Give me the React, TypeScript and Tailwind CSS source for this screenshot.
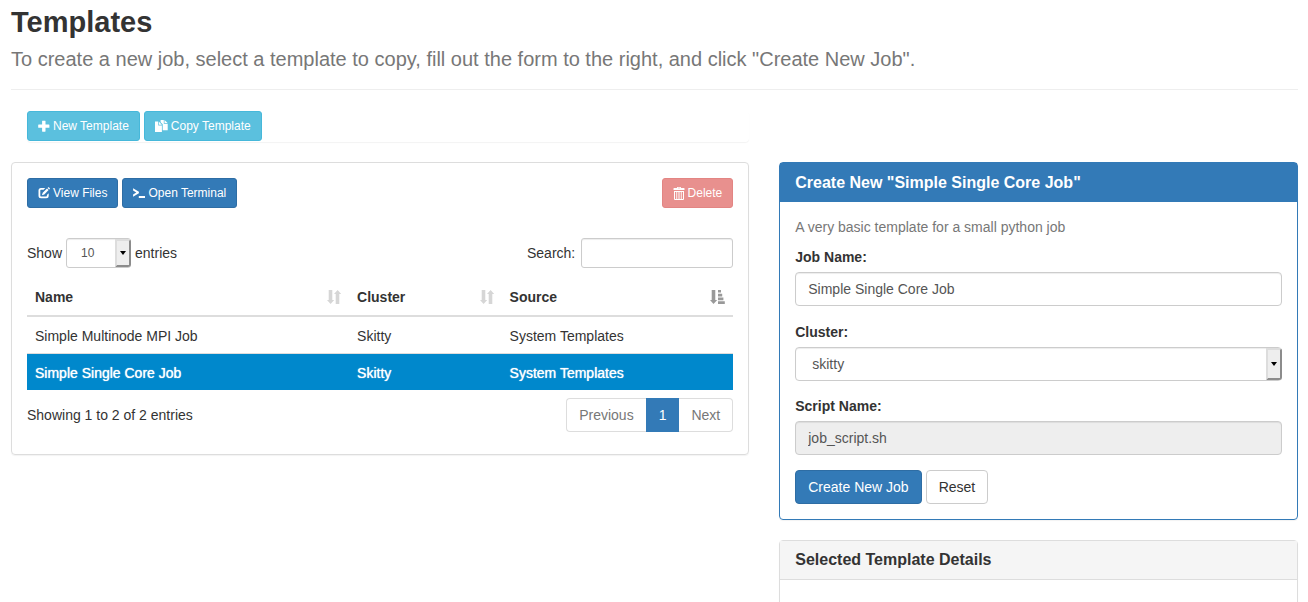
import { useState, type ReactNode } from "react";

type IconProps = { className?: string };

function Glyph({ children, viewBox = "0 0 12 12", className = "size-3" }: { children: ReactNode; viewBox?: string; className?: string }) {
  return (
    <svg viewBox={viewBox} className={`shrink-0 ${className}`} fill="currentColor" aria-hidden="true">
      {children}
    </svg>
  );
}

const PlusIcon = () => (
  <Glyph>
    <path d="M4.500.700h2.600q.4 0 .4.400v3.500h3.500q.4 0 .4.400v2.400q0 .4-.4.400H7.500v3.500q0 .4-.4.400H4.500q-.4 0-.4-.4V7.800H.600q-.4 0-.4-.4V5q0-.4.400-.4h3.500V1.100q0-.4.400-.4z" />
  </Glyph>
);

const CopyIcon = () => (
  <Glyph viewBox="0 0 13 12" className="h-3 w-[13px]">
    <path d="M0 1.500h3.300v4h3.600V12H0z" />
    <path d="M4 1.700l2.900 3H4z" />
    <path d="M5.600 0h3.200v3.700h3.900v6.500H7.700V4.300L5.600 2.200z" />
    <path d="M9.500 0l3.100 2.900H9.500z" />
  </Glyph>
);

const EditIcon = () => (
  <Glyph>
    <path d="M7.300 1H3A2.500 2.500 0 0 0 .5 3.500v5.200A2.500 2.500 0 0 0 3 11.200h5.200a2.500 2.500 0 0 0 2.500-2.500V6.300L8.900 8.100v.6q0 .7-.7.700H3q-.7 0-.7-.7V3.500q0-.7.7-.7h2.500z" />
    <path d="M9 1.500l1.600 1.600-4.300 4.300-2.400.9.800-2.500zM9.600.900l.6-.6q.3-.3.600 0l1 1q.3.300 0 .600l-.6.600z" />
  </Glyph>
);

const TerminalIcon = () => (
  <Glyph>
    <path d="M.1 1.200L5.900 4.700v1.600L.1 9.800V7.400l3.200-1.900L.1 3.600zM5.800 9H12v1.900H5.800z" />
  </Glyph>
);

const TrashIcon = () => (
  <Glyph viewBox="0 0 12 13" className="h-[13px] w-3">
    <path
      fillRule="evenodd"
      d="M4 1V.5Q4 0 4.500 0h3Q8 0 8 .5V1h3q.5 0 .5.500V3H.5V1.500Q.5 1 1 1zM5 1.200h2V.8H5zM1 4h10v8q0 1-1 1H2q-1 0-1-1zM2 5v7h1.300V5zM4.200 5v7h1.300V5zM6.500 5v7h1.300V5zM8.700 5v7H10V5z"
    />
  </Glyph>
);

const SortIcon = ({ className }: IconProps) => (
  <svg viewBox="0 0 14 14" className={`size-3.5 shrink-0 ${className}`} fill="currentColor" aria-hidden="true">
    <path d="M1.700 0h3.600v10h1.900L3.600 14 0 10h1.700zM8.700 14h3.600V4h1.900L10.600 0 7 4h1.700z" />
  </svg>
);

const SortAscIcon = ({ className }: IconProps) => (
  <svg viewBox="0 0 15 14" className={`h-3.5 w-[15px] shrink-0 ${className}`} fill="currentColor" aria-hidden="true">
    <path d="M1.700 0h3.600v10h1.900L3.500 14 0 10h1.700zM8 0h3v2.600H8zM8 3.700h4.200v2.700H8zM8 7.500h5.400v2.700H8zM8 11.200h6.800v2.700H8z" />
  </svg>
);

const smallButton = "flex h-[30px] items-center gap-[3px] rounded-[3px] border px-2.5 text-xs text-white";
const primary = "border-[#2e6da4] bg-[#337ab7]";
const info = "border-[#46b8da] bg-[#5bc0de]";
const field =
  "w-full rounded border border-[#ccc] px-3 text-sm text-[#555] shadow-[inset_0_1px_1px_rgba(0,0,0,0.075)]";

function DropArrow() {
  return (
    <span className="pointer-events-none absolute inset-y-px right-0 flex w-4 items-center justify-center rounded-r-[3px] border-2 border-t-[#ddd] border-r-[#8c8c8c] border-b-[#8c8c8c] border-l-[#ddd] bg-[#eee]">
      <svg viewBox="0 0 6 4" className="h-1 w-1.5" aria-hidden="true">
        <path d="M0 0h6L3 4z" />
      </svg>
    </span>
  );
}

const templates = [
  { name: "Simple Multinode MPI Job", cluster: "Skitty", source: "System Templates" },
  { name: "Simple Single Core Job", cluster: "Skitty", source: "System Templates" },
];

function TemplatesTable() {
  const [selected, setSelected] = useState(1);
  return (
    <table className="mt-2.5 w-full table-fixed border-collapse text-left">
      <colgroup>
        <col className="w-[45.6%]" />
        <col className="w-[21.6%]" />
        <col />
      </colgroup>
      <thead>
        <tr className="h-[38px] border-b-2 border-[#ddd]">
          <th className="px-2">
            <div className="flex items-center justify-between">
              Name <SortIcon className="text-[#d6d6d6]" />
            </div>
          </th>
          <th className="px-2">
            <div className="flex items-center justify-between">
              Cluster <SortIcon className="text-[#d6d6d6]" />
            </div>
          </th>
          <th className="px-2">
            <div className="flex items-center justify-between">
              Source <SortAscIcon className="text-[#999]" />
            </div>
          </th>
        </tr>
      </thead>
      <tbody>
        {templates.map((t, i) => (
          <tr
            key={t.name}
            onClick={() => setSelected(i)}
            className={
              i === selected
                ? "h-[37px] border-t border-[#ddd] bg-[#0088cc] text-white [text-shadow:0_0_1px_#fff]"
                : "h-[37px]"
            }
          >
            <td className="px-2 pt-0.5">{t.name}</td>
            <td className="px-2 pt-0.5">{t.cluster}</td>
            <td className="px-2 pt-0.5">{t.source}</td>
          </tr>
        ))}
      </tbody>
    </table>
  );
}

function TemplatesPanel() {
  return (
    <section className="rounded border border-[#ddd] p-[15px] pb-[22px] shadow-[0_1px_1px_rgba(0,0,0,0.05)]">
      <div className="flex items-center gap-1">
        <button className={`${smallButton} ${primary}`}>
          <EditIcon /> View Files
        </button>
        <button className={`${smallButton} ${primary}`}>
          <TerminalIcon /> Open Terminal
        </button>
        <button className={`${smallButton} ml-auto border-[#e38583] bg-[#e8908e]`}>
          <TrashIcon /> Delete
        </button>
      </div>
      <div className="mt-[30px] flex items-center justify-between">
        <div className="flex items-center gap-1">
          <label htmlFor="length">Show</label>
          <div className="relative w-[65px]">
            <select
              id="length"
              defaultValue="10"
              className="h-[30px] w-full appearance-none rounded-[3px] border border-[#ccc] bg-white pl-3.5 text-xs text-[#555] shadow-[inset_0_1px_1px_rgba(0,0,0,0.075)]"
            >
              <option>10</option>
              <option>25</option>
              <option>50</option>
            </select>
            <DropArrow />
          </div>
          <span>entries</span>
        </div>
        <div className="flex items-center gap-1.5">
          <label htmlFor="search">Search:</label>
          <input
            id="search"
            type="search"
            className="h-[30px] w-[152px] rounded-[3px] border border-[#ccc] px-2.5 text-xs text-[#555] shadow-[inset_0_1px_1px_rgba(0,0,0,0.075)]"
          />
        </div>
      </div>
      <TemplatesTable />
      <div className="mt-2 flex items-center justify-between">
        <p>Showing 1 to 2 of 2 entries</p>
        <nav className="flex h-[34px] text-[#777]" aria-label="Pages">
          <button className="rounded-l border border-r-0 border-[#ddd] px-3">Previous</button>
          <button className="border border-[#337ab7] bg-[#337ab7] px-3 text-white">1</button>
          <button className="rounded-r border border-l-0 border-[#ddd] px-3">Next</button>
        </nav>
      </div>
    </section>
  );
}

function CreateJobPanel() {
  return (
    <section className="rounded border border-[#337ab7] shadow-[0_1px_1px_rgba(0,0,0,0.05)]">
      <h2 className="bg-[#337ab7] px-[15px] py-2.5 text-base leading-[19px] font-bold text-white">
        Create New "Simple Single Core Job"
      </h2>
      <form className="p-[15px]" onSubmit={(e) => e.preventDefault()}>
        <p className="text-[#777]">A very basic template for a small python job</p>
        <label htmlFor="job" className="mt-2.5 mb-[5px] block font-bold">
          Job Name:
        </label>
        <input id="job" defaultValue="Simple Single Core Job" className={`h-[34px] ${field}`} />
        <label htmlFor="cluster" className="mt-4 mb-[5px] block font-bold">
          Cluster:
        </label>
        <div className="relative">
          <select id="cluster" defaultValue="skitty" className={`h-[34px] appearance-none bg-white indent-1 ${field}`}>
            <option>skitty</option>
          </select>
          <DropArrow />
        </div>
        <label htmlFor="script" className="mt-[15px] mb-[5px] block font-bold">
          Script Name:
        </label>
        <input id="script" readOnly value="job_script.sh" className={`h-[34px] bg-[#eee] ${field}`} />
        <div className="mt-[15px] flex gap-1">
          <button className="h-[34px] rounded border border-[#2e6da4] bg-[#337ab7] px-3 text-white">
            Create New Job
          </button>
          <button type="reset" className="h-[34px] rounded border border-[#ccc] bg-white px-3">
            Reset
          </button>
        </div>
      </form>
    </section>
  );
}

export default function App() {
  return (
    <div className="h-screen overflow-hidden bg-white pr-2.5 pl-[11px] font-['Liberation_Sans',Arial,sans-serif] text-sm leading-5 text-[#333]">
      <header className="border-b border-[#eee] pt-1.5 pb-[17px]">
        <h1 className="text-[29px] leading-8 font-bold">Templates</h1>
        <p className="mt-2 text-xl leading-[26px] text-[#777]">
          To create a new job, select a template to copy, fill out the form to the right, and click "Create New Job".
        </p>
      </header>
      <main className="mt-[21px] grid grid-cols-12 gap-x-[30px]">
        <div className="col-span-7">
          <div className="mb-5 ml-4 flex gap-1 rounded pb-px shadow-[0_1px_1px_rgba(0,0,0,0.05)]">
            <button className={`${smallButton} ${info}`}>
              <PlusIcon /> New Template
            </button>
            <button className={`${smallButton} ${info}`}>
              <CopyIcon /> Copy Template
            </button>
          </div>
          <TemplatesPanel />
        </div>
        <div className="col-span-5 mt-[51px]">
          <CreateJobPanel />
          <section className="mt-5 rounded border border-[#ddd] shadow-[0_1px_1px_rgba(0,0,0,0.05)]">
            <h2 className="border-b border-[#ddd] bg-[#f5f5f5] px-[15px] py-2.5 text-base leading-[18px] font-bold">
              Selected Template Details
            </h2>
            <div className="h-16" />
          </section>
        </div>
      </main>
    </div>
  );
}
